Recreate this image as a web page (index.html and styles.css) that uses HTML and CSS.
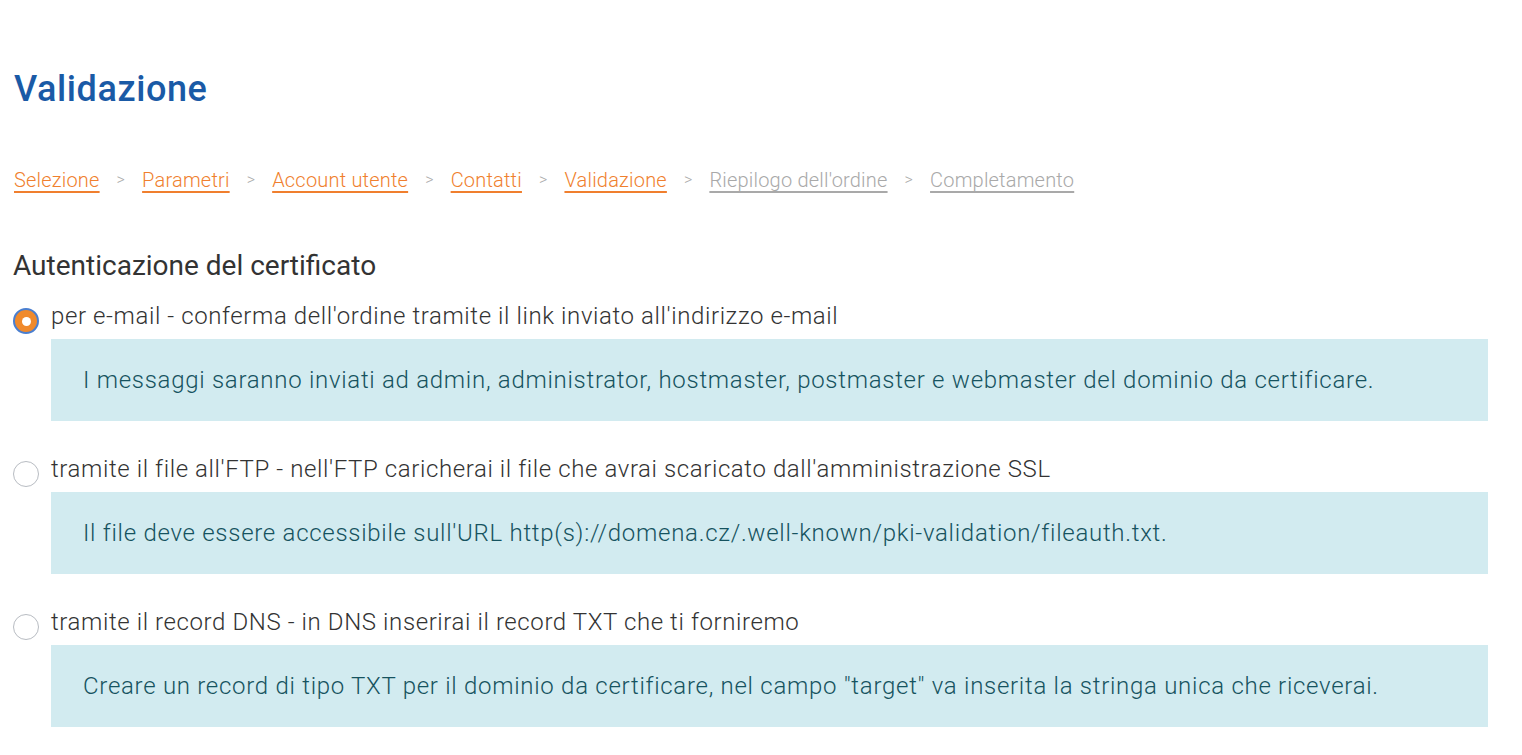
FILE: index.html
```html
<!DOCTYPE html>
<html lang="it">

<head>
  <meta charset="UTF-8">
  <meta name="viewport" content="width=device-width, initial-scale=1.0">
  <title>Validazione</title>
  <link rel="stylesheet" href="styles.css">
</head>

<body>
  <div class="page">
    <h1 class="title">Validazione</h1>

    <nav class="steps">
      <a class="step done" href="#">Selezione</a>
      <span class="sep">&gt;</span>
      <a class="step done" href="#">Parametri</a>
      <span class="sep">&gt;</span>
      <a class="step done" href="#">Account utente</a>
      <span class="sep">&gt;</span>
      <a class="step done" href="#">Contatti</a>
      <span class="sep">&gt;</span>
      <a class="step done" href="#">Validazione</a>
      <span class="sep">&gt;</span>
      <a class="step todo" href="#">Riepilogo dell'ordine</a>
      <span class="sep">&gt;</span>
      <a class="step todo" href="#">Completamento</a>
    </nav>

    <h2 class="subtitle">Autenticazione del certificato</h2>

    <div class="option">
      <label class="choice">
        <span class="radio checked"></span>
        <span>per e-mail - conferma dell'ordine tramite il link inviato all'indirizzo e-mail</span>
      </label>
      <div class="info">I messaggi saranno inviati ad admin, administrator, hostmaster, postmaster e webmaster del dominio da certificare.</div>
    </div>

    <div class="option">
      <label class="choice">
        <span class="radio"></span>
        <span>tramite il file all'FTP - nell'FTP caricherai il file che avrai scaricato dall'amministrazione SSL</span>
      </label>
      <div class="info">Il file deve essere accessibile sull'URL http(s)://domena.cz/.well-known/pki-validation/fileauth.txt.</div>
    </div>

    <div class="option">
      <label class="choice">
        <span class="radio"></span>
        <span>tramite il record DNS - in DNS inserirai il record TXT che ti forniremo</span>
      </label>
      <div class="info">Creare un record di tipo TXT per il dominio da certificare, nel campo "target" va inserita la stringa unica che riceverai.</div>
    </div>
  </div>
</body>

</html>
```

FILE: styles.css
```css
* {
  box-sizing: border-box;
  margin: 0;
}

body {
  font-family: Roboto, "Liberation Sans", sans-serif;
  color: #333;
  background-color: #fff;
}

.page {
  width: 1488px;
  padding: 64px 0 0 13px;
}

.title {
  font-size: 36px;
  line-height: 50px;
  font-weight: 500;
  letter-spacing: 0.6px;
  color: #1a5aa6;
  padding-left: 1px;
}

.steps {
  margin-top: 52px;
  padding-left: 1px;
  display: flex;
  align-items: center;
  gap: 17px;
  font-size: 20px;
  font-weight: 300;
  letter-spacing: 0.2px;
  line-height: 28px;
}

.step {
  text-decoration: underline;
  text-underline-offset: 4px;
}

.step.done {
  color: #f07f2e;
}

.step.todo {
  color: #a9a9a9;
}

.sep {
  color: #aaa;
  font-size: 16px;
}

.subtitle {
  margin-top: 54px;
  font-size: 28px;
  line-height: 36px;
  font-weight: normal;
  color: #333;
}

.option {
  margin-top: 14px;
  margin-bottom: 30px;
}

.option + .option {
  margin-top: 0;
}

.choice {
  display: flex;
  align-items: center;
  gap: 12px;
  font-size: 24px;
  font-weight: 300;
  letter-spacing: 0.6px;
  line-height: 32px;
  color: #333;
}

.radio {
  width: 26px;
  height: 26px;
  border-radius: 50%;
  border: 1px solid #b8bcc2;
  background-color: #fff;
  margin-top: 10px;
  flex-shrink: 0;
}

.radio.checked {
  border: 2px solid #4a7fd0;
  background-color: #f08a2c;
  display: flex;
  align-items: center;
  justify-content: center;
}

.radio.checked::after {
  content: "";
  width: 9px;
  height: 9px;
  border-radius: 50%;
  background-color: #fff;
}

.info {
  margin-left: 38px;
  margin-top: 5px;
  height: 82px;
  padding: 0 32px;
  display: flex;
  align-items: center;
  background-color: #d2ebf0;
  color: #16535f;
  font-size: 24px;
  font-weight: 300;
  letter-spacing: 0.72px;
}
```
